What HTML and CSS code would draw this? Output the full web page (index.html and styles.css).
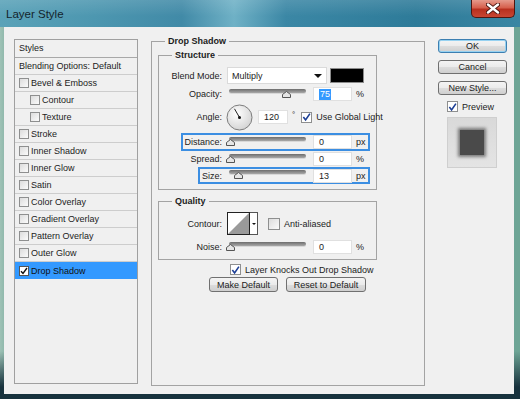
FILE: index.html
```html
<!DOCTYPE html>
<html lang="en">
<head>
  <meta charset="UTF-8">
  <title>Layer Style</title>
  <link rel="stylesheet" href="styles.css">
</head>
<body>
  <div class="window">
    <div class="titlebar">
      <span class="title">Layer Style</span>
      <span class="close">
        <svg width="14" height="11" viewBox="0 0 14 11">
          <path d="M2 1.5 L12 9.5 M12 1.5 L2 9.5" stroke="#4a1510" stroke-width="4.2" stroke-linecap="round"/>
          <path d="M2 1.5 L12 9.5 M12 1.5 L2 9.5" stroke="#ffffff" stroke-width="2.4" stroke-linecap="round"/>
        </svg>
      </span>
    </div>

    <div class="dialog">
      <div class="styles-list">
        <div class="list-head">Styles</div>
        <div class="list-row">Blending Options: Default</div>
        <div class="list-row"><span class="check"></span>Bevel &amp; Emboss</div>
        <div class="list-row sub"><span class="check"></span>Contour</div>
        <div class="list-row sub"><span class="check"></span>Texture</div>
        <div class="list-row"><span class="check"></span>Stroke</div>
        <div class="list-row"><span class="check"></span>Inner Shadow</div>
        <div class="list-row"><span class="check"></span>Inner Glow</div>
        <div class="list-row"><span class="check"></span>Satin</div>
        <div class="list-row"><span class="check"></span>Color Overlay</div>
        <div class="list-row"><span class="check"></span>Gradient Overlay</div>
        <div class="list-row"><span class="check"></span>Pattern Overlay</div>
        <div class="list-row"><span class="check"></span>Outer Glow</div>
        <div class="list-row selected"><span class="check on dark"><svg width="8" height="8" viewBox="0 0 8 8"><path d="M1 4.2 L3 6.5 L7 1" fill="none" stroke="#111" stroke-width="1.4"/></svg></span>Drop Shadow</div>
      </div>

      <fieldset class="group main">
        <legend>Drop Shadow</legend>

        <fieldset class="group structure">
          <legend>Structure</legend>

          <div class="row blend-row">
            <span class="label">Blend Mode:</span>
            <span class="select">Multiply<span class="caret"></span></span>
            <span class="swatch"></span>
          </div>

          <div class="row">
            <span class="label">Opacity:</span>
            <span class="slider"><span class="track"></span><span class="thumb" style="margin-left: 53px"><svg width="9" height="7" viewBox="0 0 9 7"><path d="M4.5 0.5 L8.5 3.5 V6.5 H0.5 V3.5 Z" fill="#e6e6e6" stroke="#555"/></svg></span></span>
            <span class="field"><span class="sel-text">75</span></span>
            <span class="unit">%</span>
          </div>

          <div class="row angle-row">
            <span class="label">Angle:</span>
            <svg class="dial" width="27" height="27" viewBox="0 0 27 27">
              <defs>
                <radialGradient id="dialFill" cx="40%" cy="35%" r="70%">
                  <stop offset="0" stop-color="#ffffff"/>
                  <stop offset="1" stop-color="#d2d2d2"/>
                </radialGradient>
              </defs>
              <circle cx="13.5" cy="13.5" r="12.5" fill="url(#dialFill)" stroke="#7d7d7d"/>
              <line x1="13.5" y1="13.5" x2="8.5" y2="4.8" stroke="#222" stroke-width="1"/>
              <circle cx="13.5" cy="13.5" r="1.5" fill="#111"/>
            </svg>
            <span class="field angle-field">120</span>
            <span class="degree">°</span>
            <span class="check on global"><svg width="10" height="10" viewBox="0 0 10 10"><path d="M1.5 5 L4 8.3 L8.8 1.2" fill="none" stroke="#1d3f95" stroke-width="1.8"/></svg></span>
            <span class="check-text">Use Global Light</span>
          </div>

          <div class="row hl distance">
            <span class="label">Distance:</span>
            <span class="slider"><span class="track"></span><span class="thumb" style="margin-left: -3px"><svg width="9" height="7" viewBox="0 0 9 7"><path d="M4.5 0.5 L8.5 3.5 V6.5 H0.5 V3.5 Z" fill="#e6e6e6" stroke="#555"/></svg></span></span>
            <span class="field">0</span>
            <span class="unit">px</span>
          </div>

          <div class="row">
            <span class="label">Spread:</span>
            <span class="slider"><span class="track"></span><span class="thumb" style="margin-left: -3px"><svg width="9" height="7" viewBox="0 0 9 7"><path d="M4.5 0.5 L8.5 3.5 V6.5 H0.5 V3.5 Z" fill="#e6e6e6" stroke="#555"/></svg></span></span>
            <span class="field">0</span>
            <span class="unit">%</span>
          </div>

          <div class="row hl size">
            <span class="label">Size:</span>
            <span class="slider"><span class="track"></span><span class="thumb" style="margin-left: 5px"><svg width="9" height="7" viewBox="0 0 9 7"><path d="M4.5 0.5 L8.5 3.5 V6.5 H0.5 V3.5 Z" fill="#e6e6e6" stroke="#555"/></svg></span></span>
            <span class="field">13</span>
            <span class="unit">px</span>
          </div>
        </fieldset>

        <fieldset class="group quality">
          <legend>Quality</legend>

          <div class="row contour-row">
            <span class="label">Contour:</span>
            <span class="contour">
              <svg class="curve" width="23" height="23" viewBox="0 0 23 23">
                <rect x="0.5" y="0.5" width="22" height="22" fill="#fff" stroke="#222"/>
                <path d="M1 22 L22 1 V22 Z" fill="#9a9a9a"/>
              </svg>
              <span class="drop"><span class="mini-caret"></span></span>
            </span>
            <span class="check aa"></span>
            <span class="check-text">Anti-aliased</span>
          </div>

          <div class="row">
            <span class="label">Noise:</span>
            <span class="slider"><span class="track"></span><span class="thumb" style="margin-left: -3px"><svg width="9" height="7" viewBox="0 0 9 7"><path d="M4.5 0.5 L8.5 3.5 V6.5 H0.5 V3.5 Z" fill="#e6e6e6" stroke="#555"/></svg></span></span>
            <span class="field">0</span>
            <span class="unit">%</span>
          </div>
        </fieldset>

        <div class="knocks">
          <span class="check on"><svg width="10" height="10" viewBox="0 0 10 10"><path d="M1.5 5 L4 8.3 L8.8 1.2" fill="none" stroke="#1d3f95" stroke-width="1.8"/></svg></span>
          <span class="check-text">Layer Knocks Out Drop Shadow</span>
        </div>

        <div class="defaults">
          <button class="btn make">Make Default</button>
          <button class="btn reset">Reset to Default</button>
        </div>
      </fieldset>

      <div class="actions">
        <button class="btn ok">OK</button>
        <button class="btn">Cancel</button>
        <button class="btn">New Style...</button>
        <div class="preview-row">
          <span class="check on"><svg width="10" height="10" viewBox="0 0 10 10"><path d="M1.5 5 L4 8.3 L8.8 1.2" fill="none" stroke="#1d3f95" stroke-width="1.8"/></svg></span>
          <span class="check-text">Preview</span>
        </div>
        <div class="preview">
          <div class="swatch-box"></div>
        </div>
      </div>
    </div>
  </div>
</body>
</html>
```

FILE: styles.css
```css
body {
  margin: 0;
  width: 520px;
  height: 399px;
  overflow: hidden;
  font-family: "Liberation Sans", Arial, sans-serif;
  font-size: 9px;
  color: #1c1c1c;
}

.window {
  width: 520px;
  height: 399px;
  display: flex;
  flex-direction: column;
  background:
    linear-gradient(to bottom, rgba(0, 0, 0, 0) 88%, #17323d 97%),
    linear-gradient(to right, #9fc2b6 0, #8db7aa 1%, #4f95ad 3%, #3f88a5 40%, #6aaac0 45%, #3a84a2 55%, #2b7694 85%, #6ea596 99%);
}

.titlebar {
  height: 27px;
  flex: none;
  display: flex;
  align-items: flex-start;
  background:
    linear-gradient(to bottom, rgba(255, 255, 255, 0.12), rgba(255, 255, 255, 0) 60%),
    linear-gradient(to right, #5aa2b8 0, #4d97b0 18%, #418aa7 35%, #6fb1c6 45%, #3b87a5 55%, #2e7b99 80%, #3a86a3 100%);
}

.title {
  margin: 8px 0 0 6px;
  font-size: 11.5px;
  color: #14242c;
}

.close {
  margin-left: auto;
  margin-right: 5px;
  width: 44px;
  height: 18px;
  box-sizing: border-box;
  display: flex;
  align-items: center;
  justify-content: center;
  border: 1px solid #4d1712;
  border-top: none;
  border-radius: 0 0 5px 5px;
  background: linear-gradient(to bottom, #e59a8c 0, #d6604d 45%, #b8301f 55%, #c84633 100%);
}

.dialog {
  margin: 0 6px 5px 4px;
  height: 367px;
  box-sizing: border-box;
  background: #f0f0f0;
  display: flex;
  align-items: flex-start;
  padding: 8px 0 0 10px;
}

/* left list */

.styles-list {
  margin-top: 4px;
  width: 124px;
  height: 345px;
  box-sizing: border-box;
  border: 1px solid #a0a0a0;
  background: #f0f0f0;
}

.list-head {
  height: 18px;
  box-sizing: border-box;
  padding-left: 4px;
  line-height: 17px;
  border-bottom: 1px solid #a8a8a8;
}

.list-row {
  height: 17px;
  box-sizing: border-box;
  display: flex;
  align-items: center;
  padding-left: 4px;
  border-bottom: 1px solid #cdcdcd;
}

.list-row.sub {
  padding-left: 15px;
}

.list-row .check {
  width: 10px;
  height: 10px;
  margin-right: 2px;
}

.list-row.selected {
  background: #3399ff;
  border-bottom: none;
  color: #111;
}

.check {
  width: 11px;
  height: 11px;
  box-sizing: border-box;
  flex: none;
  display: inline-flex;
  align-items: center;
  justify-content: center;
  border: 1px solid #8e8f8f;
  background: linear-gradient(to bottom right, #dcdcdc, #fbfbfb);
}

.check.on {
  background: #fff;
}

.check.dark {
  border-color: #555;
}

.check-text {
  margin-left: 4px;
  white-space: nowrap;
}

/* group boxes */

.group {
  margin: 0;
  padding: 0;
  border: 1px solid #a3a3a3;
  box-sizing: border-box;
  min-width: 0;
}

.group legend {
  margin-left: 13px;
  padding: 0 3px;
  line-height: 12px;
  font-weight: bold;
}

.main {
  margin-left: 13px;
  width: 274px;
  height: 351px;
}

.structure {
  margin: 2px 0 0 6px;
  width: 219px;
  height: 141px;
}

.quality {
  margin: 5px 0 0 6px;
  width: 219px;
  height: 65px;
}

.row {
  display: flex;
  align-items: center;
  height: 16px;
  margin: 1px 0 0 3px;
  white-space: nowrap;
}

.label {
  width: 60px;
  flex: none;
  text-align: right;
}

.blend-row {
  height: 19px;
  margin-top: 5px;
}

.select {
  margin-left: 5px;
  width: 100px;
  height: 17px;
  box-sizing: border-box;
  display: flex;
  align-items: center;
  padding-left: 4px;
  background: #fff;
  border: 1px solid #dadada;
}

.caret {
  margin-left: auto;
  margin-right: 4px;
  border-left: 4px solid transparent;
  border-right: 4px solid transparent;
  border-top: 4px solid #111;
}

.swatch {
  margin-left: 3px;
  width: 32px;
  height: 13px;
  background: #000;
  border: 1px solid #8c8c8c;
}

.slider {
  margin-left: 7px;
  width: 77px;
  height: 12px;
  flex: none;
  display: flex;
  flex-direction: column;
  align-self: center;
  margin-top: 1px;
}

.track {
  height: 4px;
  border-radius: 2px;
  background: linear-gradient(to bottom, #6d6d6d, #a9a9a9);
  box-shadow: 0 1px 0 #d8d8d8;
}

.thumb {
  display: block;
  width: 9px;
  height: 7px;
  margin-top: -2px;
}

.thumb svg {
  display: block;
}

.field {
  margin-left: 7px;
  width: 39px;
  height: 14px;
  box-sizing: border-box;
  flex: none;
  display: flex;
  align-items: center;
  padding-left: 5px;
  background: #fff;
  border: 1px solid #e0e0e0;
}

.sel-text {
  background: #3399ff;
  color: #fff;
  padding: 0 1px;
  line-height: 11px;
}

.unit {
  margin-left: 4px;
}

.angle-row {
  height: 28px;
}

.dial {
  margin-left: 4px;
  flex: none;
}

.angle-field {
  margin-left: 5px;
  width: 30px;
}

.degree {
  margin-left: 4px;
  font-size: 8px;
  margin-top: -5px;
}

.global {
  margin-left: 6px;
}

.hl {
  box-sizing: border-box;
  border: 2px solid #3b8ee2;
}

.distance {
  margin: 2px 0 0 22px;
  width: 189px;
  height: 18px;
}

.distance .label {
  width: 39px;
}

.size {
  margin: 0 0 0 39px;
  width: 172px;
  height: 17px;
}

.size .label {
  width: 22px;
}

.distance + .row {
  margin-top: 0;
}

.contour-row {
  height: 23px;
  margin-top: 5px;
}

.contour {
  margin-left: 5px;
  display: flex;
  height: 23px;
}

.curve {
  display: block;
}

.drop {
  width: 8px;
  height: 23px;
  box-sizing: border-box;
  border: 1px solid #555;
  border-left: none;
  background: #fff;
  display: flex;
  align-items: center;
  justify-content: center;
}

.mini-caret {
  border-left: 2px solid transparent;
  border-right: 2px solid transparent;
  border-top: 2px solid #111;
}

.aa {
  margin-left: 10px;
  width: 12px;
  height: 12px;
}

.contour-row + .row {
  margin-top: 4px;
}

.knocks {
  display: flex;
  align-items: center;
  margin: 3px 0 0 78px;
  height: 13px;
}

.defaults {
  display: flex;
  gap: 8px;
  margin: 1px 0 0 57px;
}

.btn {
  font-family: inherit;
  font-size: 9px;
  color: #1c1c1c;
  height: 15px;
  padding: 0;
  box-sizing: border-box;
  border: 1px solid #707070;
  border-radius: 3px;
  background: linear-gradient(to bottom, #f4f4f4 0, #ebebeb 50%, #dddddd 51%, #cfcfcf 100%);
  cursor: pointer;
}

.make {
  width: 69px;
}

.reset {
  width: 80px;
}

/* right column */

.actions {
  margin: 4px 0 0 13px;
  width: 69px;
  display: flex;
  flex-direction: column;
  gap: 7px;
}

.actions .btn {
  width: 69px;
  height: 14px;
}

.ok {
  border-color: #3c7fb1;
  box-shadow: inset 0 0 0 1px #97d2f1;
}

.preview-row {
  display: flex;
  align-items: center;
  margin: -1px 0 0 9px;
  height: 11px;
}

.preview {
  margin: -2px 0 0 9px;
  width: 50px;
  height: 51px;
  box-sizing: border-box;
  border: 1px solid #cfcfcf;
  background: linear-gradient(to bottom, #d9d9d9, #e4e4e4);
  display: flex;
  align-items: center;
  justify-content: center;
}

.swatch-box {
  width: 24px;
  height: 25px;
  background: #4a4a4a;
  box-shadow: 0 0 3px 2px rgba(40, 40, 40, 0.55);
}
```
